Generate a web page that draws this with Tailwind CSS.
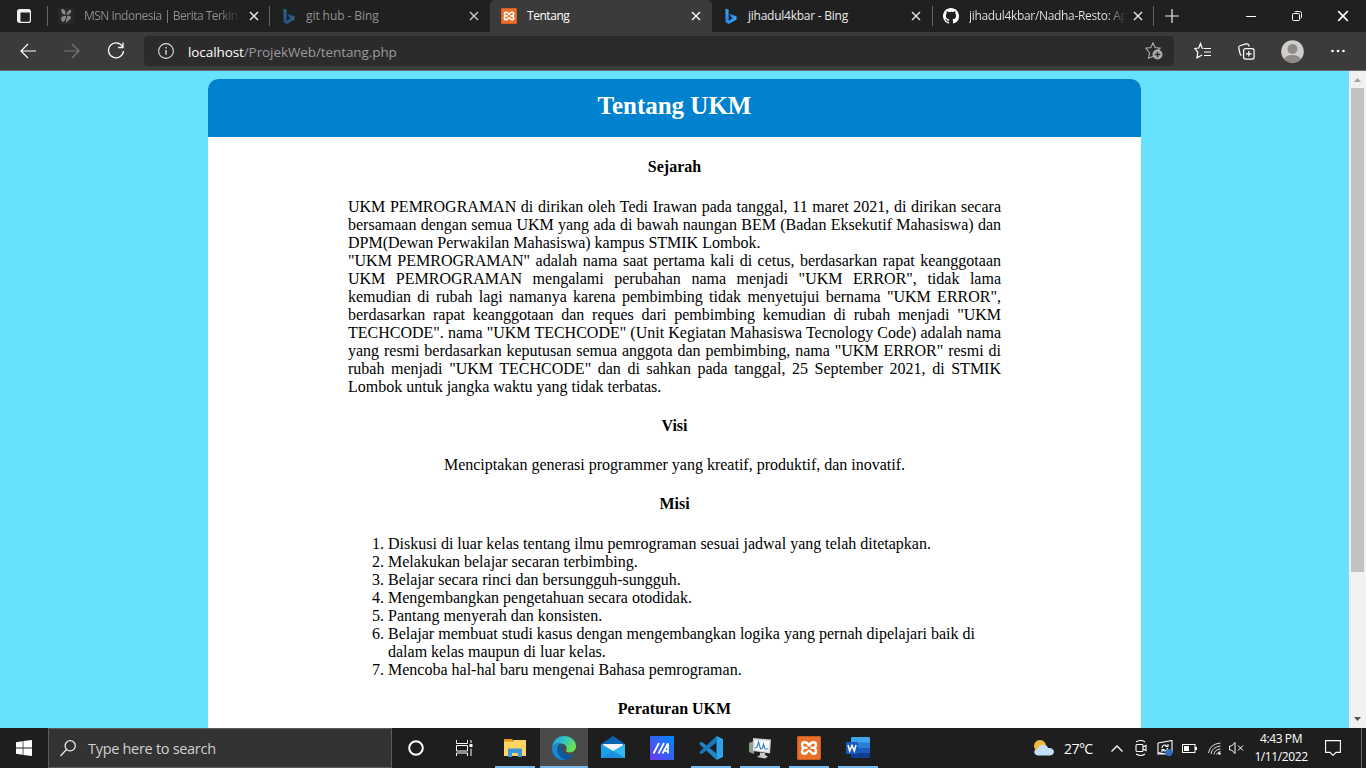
<!DOCTYPE html>
<html lang="id">
<head>
<meta charset="utf-8">
<title>Tentang</title>
<script src="https://cdn.jsdelivr.net/npm/@tailwindcss/browser@4"></script>
</head>
<body class="w-[1366px] h-[768px] overflow-hidden flex flex-col bg-[#1f1f1f] font-['Open_Sans','Noto_Sans',sans-serif]">
<svg class="absolute size-0">
  <defs>
    <linearGradient id="bingG" x1="0" y1="0" x2="1" y2="1"><stop offset="0" stop-color="#36b5f5"/><stop offset=".5" stop-color="#2b7df0"/><stop offset="1" stop-color="#35d0ee"/></linearGradient>
    <symbol id="x" viewBox="0 0 10 10"><path d="M1 1l8 8M9 1L1 9" stroke="currentColor" stroke-width="1.4" fill="none"/></symbol>
    <symbol id="bing" viewBox="0 0 12 16"><path d="M.5.5L3.7 1.7V12.600L8 10.200 5.900 9.200 4.600 5.700 11.500 8.200V11.500L3.700 16 .5 14.200Z" fill="url(#bingG)"/></symbol>
    <symbol id="xampp" viewBox="0 0 24 24"><rect width="24" height="24" rx="2" fill="#e8702a"/><rect x=".5" y=".5" width="23" height="23" rx="2" fill="none" stroke="#c85a1c"/><path d="M12 9.600C11 7.600 10 6.300 7.500 6.300 4.500 6.300 4.300 9.800 6.600 11.800 4.300 13.800 4.500 17.700 7.500 17.700 10 17.700 10 14.600 12 14.600S14 17.700 16.500 17.700C19.500 17.700 19.700 13.800 17.400 11.800 19.700 9.800 19.500 6.300 16.500 6.300 14 6.300 13 7.600 12 9.600ZM6.600 11.800H9.500M17.400 11.800H14.500" fill="none" stroke="#fff" stroke-width="2.400" stroke-linecap="round" stroke-linejoin="round"/></symbol>
  </defs>
</svg>

<!-- tab strip -->
<header class="h-8 shrink-0 flex items-center bg-[#202020] text-[12px] leading-4 text-[#e8e8e8]">
  <div class="w-[47px] pl-[17px]"><svg class="size-[14px]" viewBox="0 0 14 14"><rect x=".6" y=".6" width="12.800" height="12.800" rx="2" fill="none" stroke="#eee" stroke-width="1.200"/><path d="M1 1h12v2.500H1zM1 3.500h2.500v9.500H1z" fill="#eee"/></svg></div>
  <div class="w-[222px] h-5 border-l border-[#666] flex items-center pl-[10px] text-[#919191]">
    <svg class="size-4 mr-[10px] shrink-0" viewBox="0 0 16 16"><rect width="16" height="16" fill="#282828"/><path d="M3.500 1C6.500.5 8 3 7.500 7 5 7 2.500 4 3.500 1zM4 8.500C5 7.500 7 8 8 8c.5 2.500-1 5-3 6-2-1-2.500-3.500-1-5.500zM8.800 7C8.500 4 10.500 1.500 13 2c1 2-1 4.500-4.200 5zM9 8c2-.5 4 0 4 1.500 0 2-3 2.500-5 5.500-1 0 1-4 1-7z" fill="#858585"/></svg>
    <span class="w-[157px] whitespace-nowrap overflow-hidden tracking-[-0.52px] bg-linear-to-r from-[#919191] from-86% to-[#202020] bg-clip-text text-transparent">MSN Indonesia | Berita Terkin</span>
    <svg class="size-[10px] ml-[8px] text-[#eee]"><use href="#x"/></svg>
  </div>
  <div class="w-[221px] h-5 border-l border-[#666] flex items-center pl-[13px] text-[#919191]">
    <svg class="w-3 h-4 mr-[11px] shrink-0 opacity-50"><use href="#bing"/></svg>
    <span class="w-[155px] tracking-[-0.08px]">git hub - Bing</span>
    <svg class="size-[10px] ml-[8px] text-[#ccc]"><use href="#x"/></svg>
  </div>
  <div class="w-[222px] h-8 bg-[#3b3b3b] rounded-t-[5px] flex items-center pl-[11px] text-white">
    <svg class="size-4 mr-[10px] shrink-0"><use href="#xampp"/></svg>
    <span class="w-[155px] tracking-[-0.45px]">Tentang</span>
    <svg class="size-[10px] ml-[9px]"><use href="#x"/></svg>
  </div>
  <div class="w-[220px] h-5 flex items-center pl-[13px]">
    <svg class="w-3 h-4 mr-[11px] shrink-0"><use href="#bing"/></svg>
    <span class="w-[155px] tracking-[-0.25px]">jihadul4kbar - Bing</span>
    <svg class="size-[10px] ml-[8px]"><use href="#x"/></svg>
  </div>
  <div class="w-[221px] h-5 border-l border-[#666] flex items-center pl-[10px]">
    <svg class="size-4 mr-[10px] shrink-0" viewBox="0 0 16 16"><path fill="#fff" d="M8 0C3.580 0 0 3.580 0 8c0 3.540 2.290 6.530 5.470 7.590.4.070.55-.17.55-.38 0-.19-.01-.82-.01-1.490-2.010.37-2.530-.49-2.690-.94-.09-.23-.48-.94-.82-1.130-.28-.15-.68-.52-.01-.53.63-.01 1.080.58 1.230.82.72 1.210 1.870.87 2.330.66.07-.52.28-.87.51-1.070-1.780-.2-3.640-.89-3.640-3.950 0-.87.31-1.590.82-2.150-.08-.2-.36-1.020.08-2.120 0 0 .67-.21 2.200.82A7.600 7.600 0 0 1 8 3.860c.68 0 1.360.09 2 .27 1.530-1.040 2.200-.82 2.200-.82.44 1.100.16 1.920.08 2.120.51.56.82 1.270.82 2.150 0 3.070-1.870 3.750-3.650 3.950.29.25.54.73.54 1.480 0 1.070-.01 1.930-.01 2.200 0 .21.15.46.55.38A8 8 0 0 0 16 8c0-4.420-3.580-8-8-8z"/></svg>
    <span class="w-[157px] whitespace-nowrap overflow-hidden tracking-[-0.33px] bg-linear-to-r from-[#e8e8e8] from-88% to-[#202020] bg-clip-text text-transparent">jihadul4kbar/Nadha-Resto: Ap</span>
    <svg class="size-[10px] ml-[7px] shrink-0"><use href="#x"/></svg>
  </div>
  <div class="flex-1 h-5 border-l border-[#666] flex items-center pl-[11px] text-white">
    <svg class="w-[14px] h-[14px]" viewBox="0 0 14 14"><path d="M7 0v14M0 7h14" stroke="#eee" stroke-width="1.200"/></svg>
    <svg class="w-[10px] h-[10px] ml-[67px]" viewBox="0 0 10 10"><path d="M0 5.500h10" stroke="#fff"/></svg>
    <svg class="size-[10px] ml-[36px]" viewBox="0 0 10 10" fill="none" stroke="#fff"><rect x=".5" y="2.500" width="7" height="7" rx="1"/><path d="M2.500 1C3 .5 3 .5 4 .5h3.500c1.500 0 2 .5 2 2V6c0 1-.5 1.500-1 1.500"/></svg>
    <svg class="size-[12px] ml-[35px]"><use href="#x"/></svg>
  </div>
</header>

<!-- address bar -->
<nav class="h-[39px] shrink-0 flex items-center bg-[#3b3b3b] border-b border-[#6b6b6b] text-[#eee]">
  <svg class="w-4 h-4 ml-5" viewBox="0 0 16 16" fill="none" stroke="#fff" stroke-width="1.200"><path d="M16 8H1M8 1L1 8l7 7"/></svg>
  <svg class="w-4 h-4 ml-[28px]" viewBox="0 0 16 16" fill="none" stroke="#777" stroke-width="1.200"><path d="M0 8h15M8 1l7 7-7 7"/></svg>
  <svg class="size-[18px] ml-[27px]" viewBox="0 0 18 18" fill="none" stroke="#fff" stroke-width="1.300"><path d="M15.500 4.500A7.500 7.500 0 1 0 16.500 9M16 .5v5h-5"/></svg>
  <div class="ml-[19px] w-[1030px] h-[30px] rounded-[4px] bg-[#2b2b2b] flex items-center pl-[14px]">
    <svg class="size-4 shrink-0" viewBox="0 0 16 16" fill="none" stroke="#ddd" stroke-width="1.100"><circle cx="8" cy="8" r="7.400"/><path d="M8 7v4.800M8 4v1.500" stroke-width="1.400"/></svg>
    <div class="ml-[14px] pt-px text-[13.5px] leading-5 text-[#9a9a9a] tracking-[-0.09px]"><span class="text-white">localhost</span>/ProjekWeb/tentang.php</div>
    <svg class="ml-auto mr-[11px] w-[18px] h-[18px]" viewBox="0 0 18 18"><path d="M8 .8l2.100 4.700 5.100.6-3.800 3.500L9 14l-5.500 2.200 1.100-5.300L.8 6.200l5.100-.7z" fill="none" stroke="#aaa" stroke-width="1.100"/><circle cx="12.500" cy="12.500" r="5" fill="#aaa"/><path d="M12.500 9.800v5.400M9.800 12.500h5.400" stroke="#2b2b2b" stroke-width="1.300"/></svg>
  </div>
  <svg class="ml-5 w-[17px] h-[18px]" viewBox="0 0 17 18" fill="none" stroke="#fff" stroke-width="1.200"><path d="M9.500 6.500L8 6 6.500 1.500 4.800 6 .8 6.500l3 3.700-.8 5.600 5-2.800M10 6.500h7M10 10h7M10 13.500h7"/></svg>
  <svg class="ml-[27px] size-[17px]" viewBox="0 0 17 17" fill="none" stroke="#fff" stroke-width="1.200"><rect x="5.600" y="5.600" width="10.500" height="10.500" rx="2"/><path d="M10.800 8v5.600M8 10.800h5.600M3.500 12.500C2.500 12 2.300 11.500 2 10.500L.8 5C.5 3.500 1 3 2.500 2.500L8 .9c1.500-.4 2.500.2 3 1.800l.2.800"/></svg>
  <svg class="ml-[26px] size-[23px]" viewBox="0 0 23 23"><defs><clipPath id="av"><circle cx="11.500" cy="11.500" r="11.300"/></clipPath></defs><g clip-path="url(#av)"><rect width="23" height="23" fill="#d0cecb"/><circle cx="11.500" cy="9" r="5" fill="#8e8a86"/><ellipse cx="11.500" cy="20" rx="8.500" ry="5" fill="#8e8a86"/></g></svg>
  <svg class="ml-[27px] w-[14px] h-[4px]" viewBox="0 0 14 4" fill="#fff"><circle cx="1.500" cy="2" r="1.300"/><circle cx="7" cy="2" r="1.300"/><circle cx="12.500" cy="2" r="1.300"/></svg>
</nav>

<!-- page -->
<div class="h-[657px] shrink-0 flex bg-[#68e1ff] overflow-hidden">
  <div class="w-[1349px] pt-2 pl-[208px]">
    <main class="w-[933px] h-[649px] bg-white overflow-hidden rounded-t-[10px] font-['Liberation_Serif',serif] text-[16px] leading-[18px] text-black">
      <h2 class="h-[58px] bg-[#0082ce] text-white text-[25px] leading-[53px] font-bold text-center">Tentang UKM</h2>
      <div class="px-[140px] pt-[21px]">
        <h4 class="font-bold text-center">Sejarah</h4>
        <p class="mt-[22px] text-justify">UKM PEMROGRAMAN di dirikan oleh Tedi Irawan pada tanggal, 11 maret 2021, di dirikan secara bersamaan dengan semua UKM yang ada di bawah naungan BEM (Badan Eksekutif Mahasiswa) dan DPM(Dewan Perwakilan Mahasiswa) kampus STMIK Lombok.<br>"UKM PEMROGRAMAN" adalah nama saat pertama kali di cetus, berdasarkan rapat keanggotaan UKM PEMROGRAMAN mengalami perubahan nama menjadi "UKM ERROR", tidak lama kemudian di rubah lagi namanya karena pembimbing tidak menyetujui bernama "UKM ERROR", berdasarkan rapat keanggotaan dan reques dari pembimbing kemudian di rubah menjadi "UKM TECHCODE". nama "UKM TECHCODE" (Unit Kegiatan Mahasiswa Tecnology Code) adalah nama yang resmi berdasarkan keputusan semua anggota dan pembimbing, nama "UKM ERROR" resmi di rubah menjadi "UKM TECHCODE" dan di sahkan pada tanggal, 25 September 2021, di STMIK Lombok untuk jangka waktu yang tidak terbatas.</p>
        <h4 class="mt-[21px] font-bold text-center">Visi</h4>
        <p class="mt-[21px] text-center">Menciptakan generasi programmer yang kreatif, produktif, dan inovatif.</p>
        <h4 class="mt-[21px] font-bold text-center">Misi</h4>
        <ol class="mt-[22px] pl-10 list-decimal">
          <li>Diskusi di luar kelas tentang ilmu pemrograman sesuai jadwal yang telah ditetapkan.</li>
          <li>Melakukan belajar secaran terbimbing.</li>
          <li>Belajar secara rinci dan bersungguh-sungguh.</li>
          <li>Mengembangkan pengetahuan secara otodidak.</li>
          <li>Pantang menyerah dan konsisten.</li>
          <li>Belajar membuat studi kasus dengan mengembangkan logika yang pernah dipelajari baik di dalam kelas maupun di luar kelas.</li>
          <li>Mencoba hal-hal baru mengenai Bahasa pemrograman.</li>
        </ol>
        <h4 class="mt-[21px] font-bold text-center">Peraturan UKM</h4>
      </div>
    </main>
  </div>
  <div class="w-[17px] bg-[#f1f1f1] flex flex-col items-center">
    <svg class="w-[17px] h-[17px]" viewBox="0 0 17 17"><path d="M5 11L8.500 7 12 11z" fill="#a3a3a3"/></svg>
    <div class="w-[13px] h-[484px] bg-[#c1c1c1]"></div>
    <svg class="w-[17px] h-[17px] mt-auto" viewBox="0 0 17 17"><path d="M5 6l3.500 4L12 6z" fill="#505050"/></svg>
  </div>
</div>

<!-- taskbar -->
<footer class="h-10 shrink-0 flex items-center bg-[#1e1e1e] text-white">
  <div class="w-12 flex justify-center"><svg class="size-4" viewBox="0 0 16 16" fill="#fff"><path d="M0 2.200L6.700 1.200V7.600H0zM7.400 1.100L16 0v7.600H7.400zM0 8.400h6.700v6.400L0 13.800zM7.400 8.400H16V16L7.400 14.900z"/></svg></div>
  <div class="w-[344px] h-10 bg-[#333] border border-[#5c5c5c] flex items-center pl-[11px]">
    <svg class="w-4 h-[17px]" viewBox="0 0 16 17" fill="none" stroke="#e8e8e8" stroke-width="1.300"><circle cx="10.200" cy="5.800" r="5.100"/><path d="M6.500 9.500L.5 16"/></svg>
    <span class="ml-[12px] pt-px text-[14.500px] leading-5 text-[#d0d0d0] tracking-[-0.3px]">Type here to search</span>
  </div>
  <div class="w-12 flex justify-center"><svg class="size-4" viewBox="0 0 16 16"><circle cx="8" cy="8" r="6.800" fill="none" stroke="#fff" stroke-width="2"/></svg></div>
  <div class="w-12 flex justify-center"><svg class="w-[17px] h-4" viewBox="0 0 17 16" fill="none" stroke="#fff"><path d="M.5 0v3.500h11V0M.5 16v-3h11v3M.500 5.500h11v5.500h-11zM15 0v3M15 8.500V16"/><path d="M13.500 4h3v3h-3z" fill="#fff" stroke="none"/></svg></div>
  <div class="w-[50px] ml-[2px] h-10 flex flex-col items-center"><svg class="w-[22px] h-5 mt-[10px]" viewBox="0 0 22 20"><path d="M0 1h8l2 2h-2v4H0z" fill="#e09a0c"/><path d="M0 3.500h8.500l1.500-1.500H22v16H0z" fill="#ffd462"/><path d="M4 19v-7.500q0-1 1-1h12q1 0 1 1V19h-4v-4H8v4z" fill="#3c95dd"/></svg><div class="w-10 h-[2px] mt-auto bg-[#76b9ed]"></div></div>
  <div class="w-12 h-10 bg-[#4a4a4a] flex flex-col items-center"><svg class="size-6 mt-2" viewBox="0 0 24 24"><defs><linearGradient id="eg" x1="0" y1="0" x2="1" y2=".5"><stop offset="0" stop-color="#239ee0"/><stop offset=".5" stop-color="#2fc4c6"/><stop offset="1" stop-color="#6be052"/></linearGradient></defs><path d="M.3 11C1 4 6 0 12 0c7 0 12 4.500 12 10.200 0 4-3 6.200-6.300 6.200-3 0-4.200-1-3.400-2.200C16 11 13 7.500 9 7.500c-4 0-7 1.500-8.700 3.500z" fill="url(#eg)"/><path d="M.1 12C1 8 5 6 9 6.800c-4 2.200-5 7.200-2.500 11.200 2 3.300 5 5 8 5.600C7 25.500-.5 20 .1 12z" fill="#138ad8"/><path d="M9 8.500c-4 2.500-4 8-1.500 11.500s8 5 12 1.500c1.400-1.200 2.400-2.500 3-3.500-3 2-7 1.800-10-.5-3.500-2.500-3.500-6-1.500-8z" fill="#0c59a4"/></svg><div class="w-12 h-[2px] mt-auto bg-[#76b9ed]"></div></div>
  <div class="w-[50px] flex justify-center"><svg class="w-6 h-6" viewBox="0 0 24 24"><path d="M0 8L12 0l12 8v6H0z" fill="#0a62b4"/><path d="M2 8h20v8H2z" fill="#f4f4f4"/><path d="M0 8l12 7 12-7v14H0z" fill="#32b6f0"/><path d="M0 22V8l12 7z" fill="#1aa0e8"/><path d="M0 22l12-7 12 7z" fill="#1d8fdd"/></svg></div>
  <div class="w-[48px] flex justify-center"><svg class="size-6" viewBox="0 0 24 24"><defs><linearGradient id="mg" x1="0" y1="1" x2="1" y2="0"><stop offset="0" stop-color="#6b38ef"/><stop offset="1" stop-color="#0088fa"/></linearGradient></defs><rect width="24" height="24" fill="url(#mg)"/><path d="M3.500 17.500L9 7M8.500 17.500L14 7M12.500 17.500L18 7.500v10M14.500 14.800h3.500" stroke="#fff" stroke-width="1.800" fill="none"/></svg></div>
  <div class="w-[50px] h-10 flex flex-col items-center"><svg class="size-6 mt-2" viewBox="0 0 24 24"><path d="M2.500 5.800L.2 7.800 17.500 24V17.500z" fill="#1c8ad0"/><path d="M17.500 0L.2 16.200l2.300 2L17.500 6.500z" fill="#1678b8"/><path d="M17.500 0L24 3v18l-6.500 3z" fill="#2ba4ec"/></svg><div class="w-10 h-[2px] mt-auto bg-[#76b9ed]"></div></div>
  <div class="w-[48px] h-10 flex flex-col items-center"><svg class="size-6 mt-2" viewBox="0 0 24 24"><path d="M1 7l5-2v13l-5-2z" fill="#999"/><path d="M1.500 10v5" stroke="#4c4"/><path d="M5 2l18 1.500-1 14L5 15z" fill="#d2d2d2"/><path d="M6.500 4l15 1-1 10.500-14-1.500z" fill="#f4faff"/><path d="M7 12l2-1 1.500-5 2 7 2-1 1-4 1.500 5 3 0" fill="none" stroke="#3480b5" stroke-width="1.100"/><path d="M12 16.500l5 .5v2l3 1.500-3 2-8-1.500 3-2z" fill="#c9c9c9"/></svg><div class="w-10 h-[2px] mt-auto bg-[#76b9ed]"></div></div>
  <div class="w-[50px] h-10 flex flex-col items-center"><svg class="size-6 mt-2"><use href="#xampp"/></svg><div class="w-10 h-[2px] mt-auto bg-[#76b9ed]"></div></div>
  <div class="w-[48px] h-10 flex flex-col items-center"><svg class="w-6 h-[22px] mt-[9px]" viewBox="0 0 24 22"><path d="M6 0h17q1 0 1 1v5H5V1q0-1 1-1z" fill="#41a5ee"/><path d="M5 5.500h19V11H5z" fill="#2b7cd3"/><path d="M5 11h19v5.500H5z" fill="#185abd"/><path d="M5 16.500h19V20q0 1-1 1H6q-1 0-1-1z" fill="#103f91"/><rect y="5" width="12" height="12" rx="1" fill="#185abd"/><path d="M2 8l1.700 6L6 8.500 8.300 14 10 8" fill="none" stroke="#fff" stroke-width="1.500"/></svg><div class="w-10 h-[2px] mt-auto bg-[#76b9ed]"></div></div>
  <div class="flex-1"></div>
  <svg class="w-5 h-4 shrink-0" viewBox="0 0 20 16"><circle cx="6" cy="6" r="6" fill="#f5b93a"/><path d="M4 15.500C-1 15-1 9 4 9c0-5 9-6 10-1 7-1 8 7 2 7.500z" fill="#c4e0f8"/></svg>
  <span class="ml-[10px] w-[47px] pt-px text-[14px] leading-5 tracking-[-0.55px] whitespace-nowrap">27°C</span>
  <svg class="w-3 h-[7px] shrink-0" viewBox="0 0 12 7" fill="none" stroke="#fff" stroke-width="1.300"><path d="M.5 6.500L6 1l5.500 5.500"/></svg>
  <svg class="ml-[12px] w-3 h-4 shrink-0" viewBox="0 0 12 16" fill="none" stroke="#fff" stroke-width="1.100"><rect x="1" y="4.500" width="7" height="7" rx="1"/><path d="M8 7l3-1.500v5L8 9M1 2q5-3 9 0M1 14q5 3 9 0"/></svg>
  <svg class="ml-[10px] w-4 h-4 shrink-0" viewBox="0 0 16 16" fill="none" stroke="#fff" stroke-width="1.100"><path d="M1 3l14-2.500v12M1 3v9.500l8 1.500M0 14h9"/><path d="M5 8q0-3 3-3l2 1M11 4v2.500H8.500M10.500 8q0 3-3 3L6 10M5 12V9.500h2.500"/><circle cx="12" cy="12.500" r="3.600" fill="#2b6fc0" stroke="none"/></svg>
  <svg class="ml-[9px] w-[15px] h-[9px] shrink-0" viewBox="0 0 15 9"><rect x=".5" y=".5" width="12.500" height="8" fill="none" stroke="#fff"/><path d="M2 2h5v5H2zM13 3h2v3h-2z" fill="#fff"/></svg>
  <svg class="ml-[11px] w-[13px] h-[13px] shrink-0" viewBox="0 0 13 13" fill="none" stroke="#ddd"><path d="M.5 11Q2 2 12.500 1M3 12Q4 5 12.500 4M6 12.500q.5-5 6.500-5.500M8.500 12.500q1-2.500 4-3"/><circle cx="11.500" cy="11.500" r="1.300" fill="#fff" stroke="none"/></svg>
  <svg class="ml-[8px] w-[15px] h-3 shrink-0" viewBox="0 0 15 12" fill="none" stroke="#fff"><path d="M.5 4v4h2L6 11.500V.5L2.500 4zM9 3.500l5 5M14 3.500l-5 5"/></svg>
  <div class="ml-[10px] w-[54px] text-center text-[12px] leading-[18px] tracking-[-0.4px] whitespace-nowrap">4:43 PM<br><span class="-mx-2">1/11/2022</span></div>
  <svg class="ml-[17px] w-4 h-4 shrink-0" viewBox="0 0 16 16" fill="none" stroke="#fff" stroke-width="1.100"><path d="M.6.6h14.800v11.800H11L8 15.400 5 12.400H.6z"/></svg>
  <div class="ml-5 mr-1 w-px h-10 bg-[#666]"></div>
</footer>
</body>
</html>
